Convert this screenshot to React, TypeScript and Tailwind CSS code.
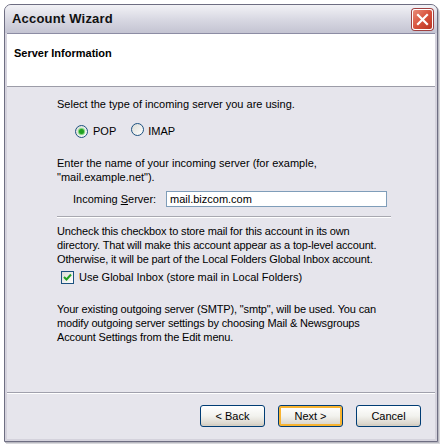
import React from "react";

function Radio({ checked }: { checked?: boolean }) {
  return (
    <span className="relative inline-flex h-[13px] w-[13px] items-center justify-center rounded-full border border-[#1c5180] bg-gradient-to-br from-[#dcdcd6] to-white">
      {checked && (
        <span className="h-[5px] w-[5px] rounded-full bg-[#21a121] shadow-[0_0_1px_1px_#6fd26f]" />
      )}
    </span>
  );
}

function CheckBox() {
  return (
    <span className="inline-flex h-[13px] w-[13px] items-center justify-center border border-[#1c5180] bg-gradient-to-br from-[#dcdcd6] to-white">
      <svg width="9" height="9" viewBox="0 0 9 9">
        <path d="M1 4 L3.5 6.5 L8 1.5" fill="none" stroke="#21a121" strokeWidth="2" />
      </svg>
    </span>
  );
}

function WizButton({ label, focused }: { label: string; focused?: boolean }) {
  return (
    <button
      className={
        "h-[22px] w-[65px] rounded-[3px] border border-[#003c74] bg-gradient-to-b from-white via-[#f2f2ee] to-[#d6d0c5] text-[11px] text-black " +
        (focused ? "shadow-[inset_0_0_0_2px_#f8b330]" : "shadow-[inset_0_-2px_0_#d6d0c5]")
      }
    >
      {label}
    </button>
  );
}

export default function App() {
  return (
    <div className="relative h-[447px] w-[444px] bg-white font-['Liberation_Sans',Arial,sans-serif] text-[11px] leading-[14px] text-black">
      <div className="ml-[4px] pt-[4px]">
        <div className="flex h-[438px] w-[434px] flex-col rounded-t-[7px] border border-[#6e6e82] bg-[#d4d2dc] shadow-[1px_1px_0_#b8b8c0,2px_2px_0_#d8d8dc]">
          {/* title bar */}
          <div className="flex h-[28px] items-center justify-between rounded-t-[6px] bg-gradient-to-b from-[#f2f2f6] via-[#d9d9e3] to-[#c4c4d2] pl-[7px] pr-[4px]">
            <span className="text-[13px] font-bold tracking-[0.2px] text-[#111]">Account Wizard</span>
            <span className="flex h-[21px] w-[21px] items-center justify-center rounded-[3px] border border-white bg-gradient-to-br from-[#e88a78] via-[#d8523c] to-[#b83422] shadow-[0_0_0_1px_#a04040]">
              <svg width="13" height="13" viewBox="0 0 13 13">
                <path d="M2 2 L11 11 M11 2 L2 11" stroke="white" strokeWidth="2.2" strokeLinecap="square" />
              </svg>
            </span>
          </div>
          {/* body */}
          <div className="mx-[2px] mb-[2px] flex flex-1 flex-col border-t border-[#8c8ca4] bg-[#e6e5ec]">
            <div className="h-[53px] border-b border-[#9c9ca8] bg-white pl-[7px] pt-[12px]">
              <span className="text-[11px] font-bold">Server Information</span>
            </div>
            <div className="flex flex-1 flex-col pl-[50px] pt-[10px]">
              <p>Select the type of incoming server you are using.</p>
              <div className="mt-[13px] flex h-[14px] items-center pl-[18px]">
                <Radio checked />
                <span className="ml-[5px]">POP</span>
                <span className="ml-[15px]"><Radio /></span>
                <span className="ml-[4px]">IMAP</span>
              </div>
              <p className="mt-[18px]">
                Enter the name of your incoming server (for example,
                <br />"mail.example.net").
              </p>
              <div className="mt-[7px] flex h-[16px] items-center">
                <span className="w-[109px] pl-[16px]">
                  Incoming <span className="underline">S</span>erver:
                </span>
                <div className="flex h-[16px] w-[221px] items-center border border-[#7f9db9] bg-white pl-[3px]">
                  mail.bizcom.com
                </div>
              </div>
              <div className="mt-[9px] h-px w-[334px] bg-[#a8a8b0] shadow-[0_1px_0_white]" />
              <p className="mt-[7px] whitespace-nowrap tracking-[-0.15px]">
                Uncheck this checkbox to store mail for this account in its own
                <br />directory. That will make this account appear as a top-level account.
                <br />Otherwise, it will be part of the Local Folders Global Inbox account.
              </p>
              <div className="mt-[4px] flex h-[14px] items-center pl-[4px]">
                <CheckBox />
                <span className="ml-[5px]">Use Global Inbox (store mail in Local Folders)</span>
              </div>
              <p className="mt-[18px] whitespace-nowrap tracking-[-0.15px]">
                Your existing outgoing server (SMTP), "smtp", will be used. You can
                <br />modify outgoing server settings by choosing Mail &amp; Newsgroups
                <br />Account Settings from the Edit menu.
              </p>
            </div>
            <div className="h-[47px] border-t border-[#a0a0ac] shadow-[inset_0_1px_0_white]">
              <div className="flex gap-[13px] pl-[193px] pt-[12px]">
                <WizButton label="< Back" />
                <WizButton label="Next >" focused />
                <WizButton label="Cancel" />
              </div>
            </div>
          </div>
        </div>
      </div>
    </div>
  );
}
